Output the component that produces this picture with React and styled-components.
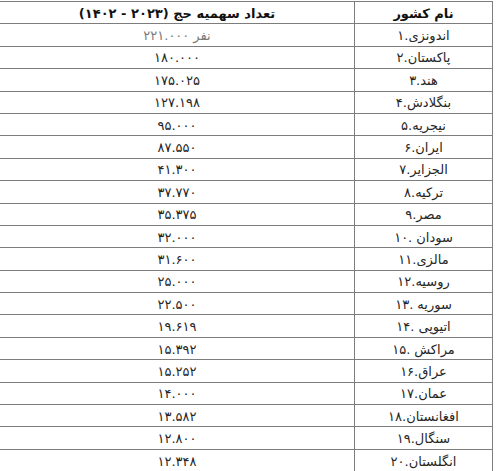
import styled, { createGlobalStyle } from 'styled-components';

const GlobalStyle = createGlobalStyle`
  html, body {
    margin: 0;
    padding: 0;
    background: #ffffff;
  }
  body {
    font-family: "DejaVu Sans", sans-serif;
  }
`;

const Table = styled.div`
  display: grid;
  grid-template-columns: 355px 138px;
  grid-auto-rows: 22.4px;
  margin-top: 1px;
  border-top: 1px solid #7d7d7d;
  width: 493px;
`;

const Cell = styled.div`
  box-sizing: border-box;
  display: flex;
  flex-direction: row;
  align-items: center;
  justify-content: center;
  gap: ${(p) => p.$gap || 0}px;
  direction: ltr;
  border-bottom: 1px solid #7d7d7d;
  border-right: 1px solid #7d7d7d;
  font-size: 13px;
  color: ${(p) => (p.$faded ? '#7a7a7a' : '#262626')};
  white-space: nowrap;
  padding-top: 1px;
`;

const HeadCell = styled(Cell)`
  direction: rtl;
  font-weight: 700;
  color: #111;
`;

// number and name are isolated so each keeps its own place in the row
const Part = styled.span`
  unicode-bidi: isolate;
`;

const rows = [
  ['۱.', 'اندونزی', '۲۲۱.۰۰۰', 'نفر'],
  ['۲.', 'پاکستان', '۱۸۰.۰۰۰'],
  ['۳.', 'هند', '۱۷۵.۰۲۵'],
  ['۴.', 'بنگلادش', '۱۲۷.۱۹۸'],
  ['۵.', 'نیجریه', '۹۵.۰۰۰'],
  ['۶.', 'ایران', '۸۷.۵۵۰'],
  ['۷.', 'الجزایر', '۴۱.۳۰۰'],
  ['۸.', 'ترکیه', '۳۷.۷۷۰'],
  ['۹.', 'مصر', '۳۵.۳۷۵'],
  ['۱۰. ', 'سودان', '۳۲.۰۰۰'],
  ['۱۱.', 'مالزی', '۳۱.۶۰۰'],
  ['۱۲.', 'روسیه', '۲۵.۰۰۰'],
  ['۱۳. ', 'سوریه', '۲۲.۵۰۰'],
  ['۱۴. ', 'اتیوپی', '۱۹.۶۱۹'],
  ['۱۵. ', 'مراکش', '۱۵.۳۹۲'],
  ['۱۶.', 'عراق', '۱۵.۲۵۲'],
  ['۱۷.', 'عمان', '۱۴.۰۰۰'],
  ['۱۸.', 'افغانستان', '۱۳.۵۸۲'],
  ['۱۹.', 'سنگال', '۱۲.۸۰۰'],
  ['۲۰.', 'انگلستان', '۱۲.۳۴۸'],
];

function Row({ num, name, quota, unit, faded }) {
  const spaced = num.endsWith(' ');
  return (
    <>
      <Cell $faded={faded} $gap={unit ? 4 : 0}>
        <Part>{quota}</Part>
        {unit && <Part>{unit}</Part>}
      </Cell>
      <Cell $gap={spaced ? 4 : 0}>
        <Part>{num.trim()}</Part>
        <Part>{name}</Part>
      </Cell>
    </>
  );
}

export default function App() {
  return (
    <>
      <GlobalStyle />
      <Table>
        <HeadCell>تعداد سهمیه حج (۲۰۲۳ - ۱۴۰۲)</HeadCell>
        <HeadCell>نام کشور</HeadCell>
        {rows.map(([num, name, quota, unit], i) => (
          <Row key={name} num={num} name={name} quota={quota} unit={unit} faded={i === 0} />
        ))}
      </Table>
    </>
  );
}
